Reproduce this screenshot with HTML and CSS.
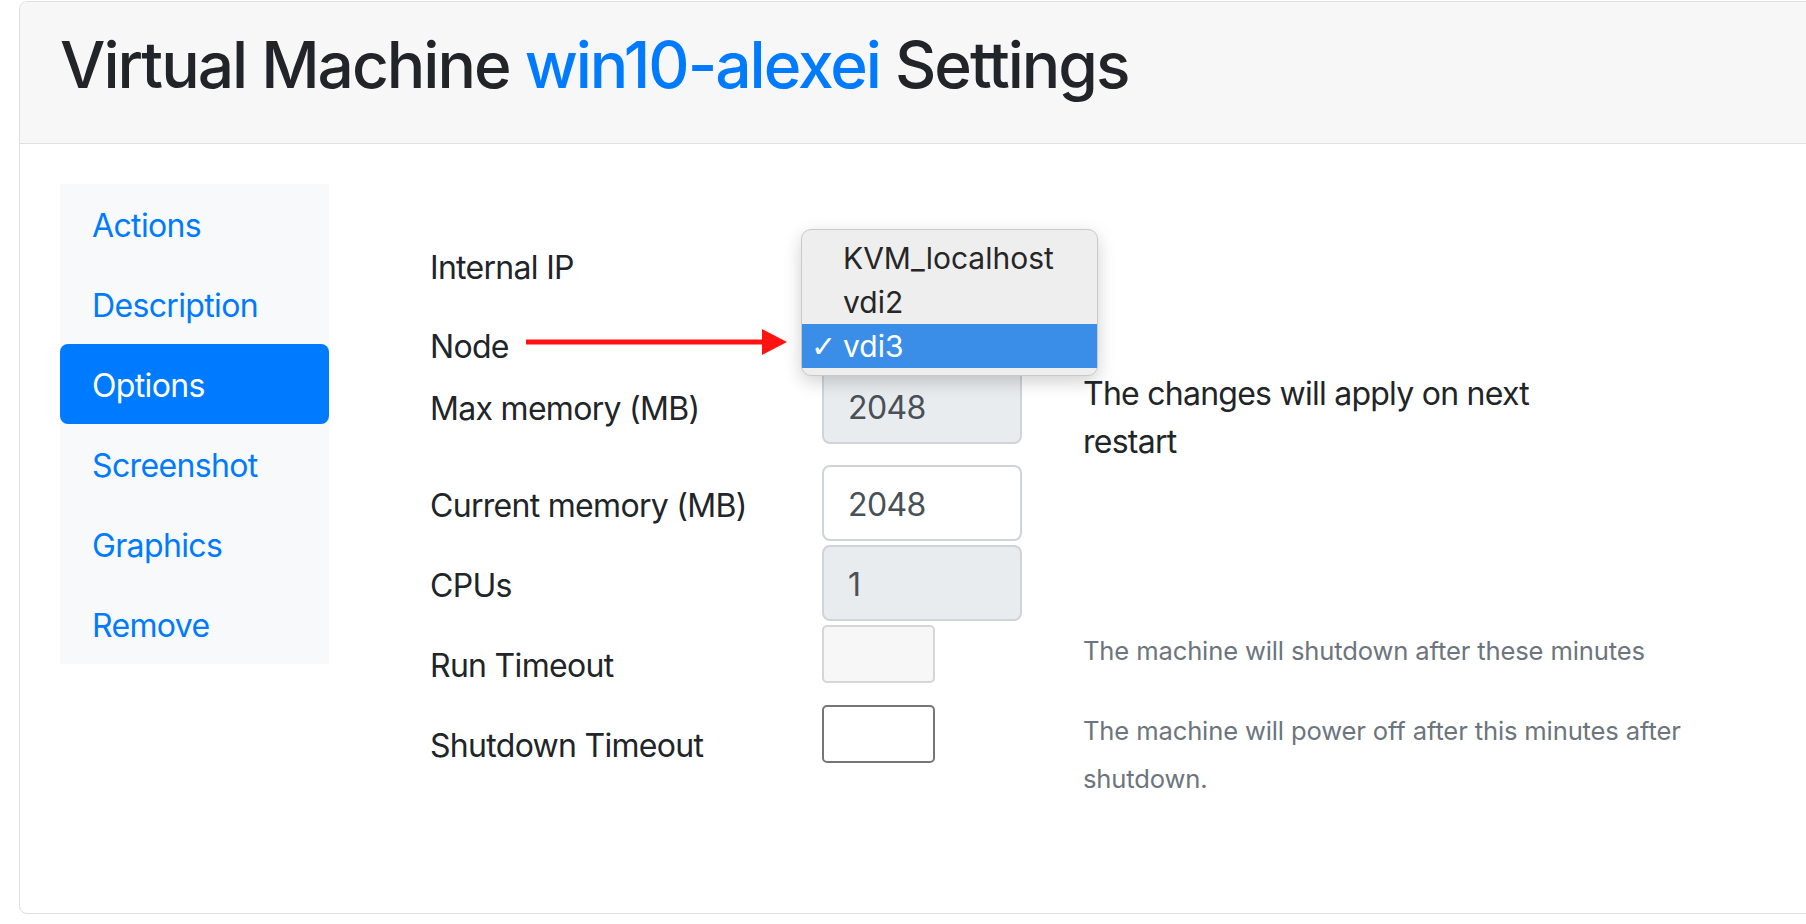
FILE: index.html
```html
<!DOCTYPE html>
<html lang="en">
<head>
<meta charset="utf-8">
<title>Virtual Machine win10-alexei Settings</title>
<link rel="stylesheet" href="styles.css">
</head>
<body>
<div class="page">
  <div class="card">
    <div class="card-header">
      <h2 class="title">Virtual Machine <span class="vm-name">win10-alexei</span> Settings</h2>
    </div>
    <div class="card-body">
      <nav class="sidenav">
        <a class="nav-link" href="#">Actions</a>
        <a class="nav-link" href="#">Description</a>
        <a class="nav-link active" href="#">Options</a>
        <a class="nav-link" href="#">Screenshot</a>
        <a class="nav-link" href="#">Graphics</a>
        <a class="nav-link" href="#">Remove</a>
      </nav>
      <div class="main">
        <div class="form-grid">
          <div class="label">Internal IP</div>
          <div class="field"></div>
          <div class="note"></div>

          <div class="label label-node">Node
            <svg class="arrow" width="262" height="30" viewBox="0 0 262 30" aria-hidden="true">
              <line x1="0" y1="15" x2="240" y2="15" stroke="#ff1212" stroke-width="5"/>
              <polygon points="236,2 261,15 236,28" fill="#ff1212"/>
            </svg>
          </div>
          <div class="field field-node">
            <div class="popup">
              <div class="popup-item">KVM_localhost</div>
              <div class="popup-item">vdi2</div>
              <div class="popup-item selected"><span class="check">✓</span>vdi3</div>
            </div>
          </div>
          <div class="note"></div>

          <div class="label">Max memory (MB)</div>
          <div class="field"><input class="form-control" type="text" value="2048" disabled></div>
          <div class="note hint">The changes will apply on next restart</div>

          <div class="label">Current memory (MB)</div>
          <div class="field"><input class="form-control" type="text" value="2048"></div>
          <div class="note"></div>

          <div class="label">CPUs</div>
          <div class="field"><input class="form-control" type="text" value="1" disabled></div>
          <div class="note"></div>

          <div class="label">Run Timeout</div>
          <div class="field"><input class="plain-input plain-disabled" type="text" disabled></div>
          <div class="note help">The machine will shutdown after these minutes</div>

          <div class="label">Shutdown Timeout</div>
          <div class="field"><input class="plain-input" type="text"></div>
          <div class="note help">The machine will power off after this minutes after shutdown.</div>
        </div>
      </div>
    </div>
  </div>
</div>
</body>
</html>
```

FILE: styles.css
```css
html, body {
  margin: 0;
  padding: 0;
  overflow: hidden;
  background: #fff;
}

body {
  font-family: Inter, "Noto Sans", "Liberation Sans", sans-serif;
  color: #212529;
}

.page {
  padding: 1px 0 0 19px;
  width: 2100px;
}

.card {
  box-sizing: border-box;
  width: 2040px;
  height: 913px;
  border: 1px solid #dfdfdf;
  border-radius: 8px;
  background: #fff;
  overflow: hidden;
}

.card-header {
  background: #f7f7f7;
  border-bottom: 1px solid #dfdfdf;
  padding: 25px 40px 23px;
}

.title {
  margin: 0 0 16px;
  font-size: 64px;
  line-height: 1.2;
  font-weight: 500;
  letter-spacing: -2px;
  color: #212529;
}

.vm-name {
  color: #007bff;
}

.card-body {
  padding: 40px;
  display: flex;
  align-items: flex-start;
}

.sidenav {
  width: 269px;
  flex: none;
  background: #f8f9fa;
  display: flex;
  flex-direction: column;
}

.nav-link {
  display: block;
  padding: 18px 32px 14px;
  font-size: 32px;
  line-height: 48px;
  letter-spacing: -0.65px;
  color: #007bff;
  text-decoration: none;
  border-radius: 8px;
}

.nav-link.active {
  background: #007bff;
  color: #fff;
}

.main {
  padding: 43px 0 0 101px;
}

.form-grid {
  display: grid;
  grid-template-columns: 392px 261px 700px;
  grid-template-rows: 79px 62px 97px 80px 80px 80px auto;
}

.label {
  font-size: 32px;
  line-height: 48px;
  padding-top: 17px;
  letter-spacing: -0.7px;
  color: #212529;
}

.label-node {
  position: relative;
}

.arrow {
  position: absolute;
  left: 96px;
  top: 21px;
}

.field {
  position: relative;
}

.popup {
  position: absolute;
  left: -21px;
  top: -77px;
  width: 297px;
  box-sizing: border-box;
  padding: 6px 0 7px;
  background: #eeeeee;
  border: 1px solid #c9c9c9;
  border-radius: 10px;
  box-shadow: 0 6px 18px rgba(0, 0, 0, 0.18);
  z-index: 5;
}

.popup-item {
  position: relative;
  height: 44px;
  line-height: 44px;
  padding-left: 41px;
  font-size: 30px;
  color: #262626;
}

.popup-item.selected {
  background: #3a8ee8;
  color: #fff;
}

.check {
  position: absolute;
  left: 9px;
  top: 1px;
  font-size: 30px;
  font-family: "DejaVu Sans", sans-serif;
  font-weight: 300;
}

.form-control {
  box-sizing: border-box;
  display: block;
  width: 200px;
  height: 76px;
  margin: 0;
  padding: 14px 24px 10px;
  font-family: inherit;
  font-size: 32px;
  line-height: 48px;
  letter-spacing: -0.6px;
  color: #495057;
  background: #fff;
  border: 2px solid #ced4da;
  border-radius: 8px;
  outline: none;
}

.form-control:disabled {
  background: #e9ecef;
  color: #495057;
  opacity: 1;
}

.plain-input {
  box-sizing: border-box;
  display: block;
  width: 113px;
  height: 58px;
  margin: 0;
  padding: 2px 4px;
  border: 2px solid #767676;
  border-radius: 5px;
  background: #fff;
  outline: none;
}

.plain-input.plain-disabled {
  background: #f7f7f7;
  border-color: #d6d6d6;
}

.note {
  color: #212529;
}

.hint {
  font-size: 32px;
  line-height: 48px;
  letter-spacing: -0.75px;
  padding-top: 2px;
  max-width: 500px;
}

.help {
  font-size: 25.6px;
  line-height: 48px;
  letter-spacing: -0.15px;
  padding-top: 2px;
  color: #6c757d;
  max-width: 660px;
}
```
